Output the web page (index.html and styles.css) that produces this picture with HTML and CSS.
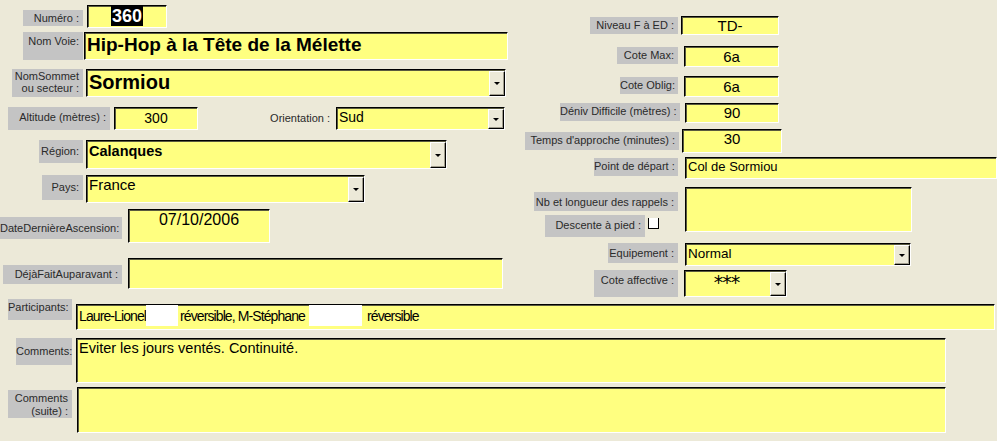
FILE: index.html
```html
<!DOCTYPE html>
<html lang="fr">
<head>
<meta charset="utf-8">
<title>Fiche voie</title>
<link rel="stylesheet" href="styles.css">
</head>
<body>
<div class="form">
  <div class="top">
    <div class="pane left">
      <div class="row r1">
        <div class="lbl l-num">Numéro :</div>
        <div class="fld f-num"><span class="sel">360</span></div>
      </div>
      <div class="row r2">
        <div class="lbl l-voie">Nom Voie:</div>
        <div class="fld f-voie">Hip-Hop à la Tête de la Mélette</div>
      </div>
      <div class="row r3">
        <div class="lbl l-som">NomSommet<br>ou secteur :</div>
        <div class="fld combo f-som"><span class="val">Sormiou</span><span class="dd"></span></div>
      </div>
      <div class="row r4">
        <div class="lbl l-alt">Altitude (mètres) :</div>
        <div class="fld f-alt">300</div>
        <div class="plain l-ori">Orientation :</div>
        <div class="fld combo f-ori"><span class="val">Sud</span><span class="dd"></span></div>
      </div>
      <div class="row r5">
        <div class="lbl l-reg">Région:</div>
        <div class="fld combo f-reg"><span class="val">Calanques</span><span class="dd"></span></div>
      </div>
      <div class="row r6">
        <div class="lbl l-pays">Pays:</div>
        <div class="fld combo f-pays"><span class="val">France</span><span class="dd"></span></div>
      </div>
      <div class="row r7">
        <div class="lbl l-date">DateDernièreAscension:</div>
        <div class="fld f-date">07/10/2006</div>
      </div>
      <div class="row r8">
        <div class="lbl l-deja">DéjàFaitAuparavant :</div>
        <div class="fld f-deja"></div>
      </div>
    </div>
    <div class="pane right">
      <div class="row q1">
        <div class="lbl l-niv">Niveau F à ED :</div>
        <div class="fld num f-niv">TD-</div>
      </div>
      <div class="row q2">
        <div class="lbl l-cmax">Cote Max:</div>
        <div class="fld num f-cmax">6a</div>
      </div>
      <div class="row q3">
        <div class="lbl l-cob">Cote Oblig:</div>
        <div class="fld num f-cob">6a</div>
      </div>
      <div class="row q4">
        <div class="lbl l-den">Déniv Difficile (mètres) :</div>
        <div class="fld num f-den">90</div>
      </div>
      <div class="row q5">
        <div class="lbl l-temps">Temps d'approche (minutes) :</div>
        <div class="fld num f-temps">30</div>
      </div>
      <div class="row q6">
        <div class="lbl l-pt">Point de départ :</div>
        <div class="fld f-pt">Col de Sormiou</div>
      </div>
      <div class="row q7">
        <div class="lblcol">
          <div class="lbl l-nb">Nb et longueur des rappels :</div>
          <div class="row desc">
            <div class="lbl l-desc">Descente à pied :</div>
            <span class="chk"></span>
          </div>
        </div>
        <div class="fld f-nb"></div>
      </div>
      <div class="row q8">
        <div class="lbl l-equ">Equipement :</div>
        <div class="fld combo f-equ"><span class="val">Normal</span><span class="dd"></span></div>
      </div>
      <div class="row q9">
        <div class="lbl l-caff">Cote affective :</div>
        <div class="fld combo f-caff"><span class="val stars">***</span><span class="dd"></span></div>
      </div>
    </div>
  </div>
  <div class="bottom">
    <div class="row p1">
      <div class="lbl l-part">Participants:</div>
      <div class="fld f-part">Laure-Lionel<span class="mask m1"></span>réversible, M-Stéphane<span class="mask m2"></span>réversible</div>
    </div>
    <div class="row p2">
      <div class="lbl l-com">Comments:</div>
      <div class="fld f-com">Eviter les jours ventés. Continuité.</div>
    </div>
    <div class="row p3">
      <div class="lbl l-suite">Comments<br>(suite) :</div>
      <div class="fld f-suite"></div>
    </div>
  </div>
</div>
</body>
</html>
```

FILE: styles.css
```css
html, body {
  margin: 0;
  padding: 0;
}
body {
  background: #ece9d8;
  font-family: "Liberation Sans", Arial, sans-serif;
  color: #111;
}
.form {
  width: 997px;
  height: 441px;
  overflow: hidden;
}
.top {
  display: flex;
  height: 297px;
}
.left {
  width: 520px;
  flex: none;
}
.right {
  flex: 1;
  min-width: 0;
}
.row {
  display: flex;
  align-items: flex-start;
}
.lbl {
  flex: none;
  box-sizing: border-box;
  background: #c4c4c4;
  color: #2a2a2a;
  font-size: 11px;
  line-height: 13px;
  text-align: right;
  padding: 3px 4px 0 0;
  white-space: nowrap;
}
.plain {
  flex: none;
  color: #2a2a2a;
  font-size: 11px;
  text-align: right;
  white-space: nowrap;
}
.fld {
  flex: none;
  box-sizing: border-box;
  background: #ffff80;
  border-top: 1px solid #000;
  border-left: 1px solid #000;
  border-right: 1px solid #fff;
  border-bottom: 1px solid #fff;
  box-shadow: inset 1px 1px 0 #5a5a40;
  color: #000;
  font-size: 14px;
  line-height: 17px;
  padding: 0 2px;
  white-space: nowrap;
  overflow: hidden;
}
.combo {
  display: flex;
  align-items: flex-start;
  padding-right: 0;
}
.combo .val {
  flex: 1;
  min-width: 0;
}
.dd {
  flex: none;
  align-self: stretch;
  width: 16px;
  box-sizing: border-box;
  margin: 1px 0 0 0;
  background: #ece9d8;
  border-top: 1px solid #fff;
  border-left: 1px solid #fff;
  border-right: 1px solid #000;
  border-bottom: 1px solid #000;
  box-shadow: inset -1px -1px 0 #a09c8c;
  display: flex;
  align-items: center;
  justify-content: center;
}
.dd::after {
  content: "";
  width: 0;
  height: 0;
  border-left: 3px solid transparent;
  border-right: 3px solid transparent;
  border-top: 3px solid #000;
}
.num {
  text-align: center;
  font-size: 15px;
}

/* ---------- left pane ---------- */
.r1 { margin-top: 5px; }
.l-num { margin: 5px 0 0 23px; width: 60px; height: 16px; padding-top: 2px; }
.f-num { margin-left: 4px; width: 80px; height: 23px; text-align: center; }
.sel {
  display: inline-block;
  background: #000;
  color: #fff;
  font-weight: bold;
  font-size: 18px;
  line-height: 20px;
  padding: 0 1px;
}

.r2 { margin-top: 4px; }
.l-voie { margin-left: 23px; width: 60px; height: 28px; }
.f-voie {
  margin-left: 1px;
  width: 424px;
  height: 28px;
  font-weight: bold;
  font-size: 19px;
  line-height: 24px;
}

.r3 { margin-top: 9px; }
.l-som { margin-left: 12px; width: 71px; height: 28px; padding-top: 1px; line-height: 12px; }
.f-som {
  margin-left: 3px;
  width: 420px;
  height: 28px;
  font-weight: bold;
  font-size: 20px;
  line-height: 24px;
}

.r4 { margin-top: 10px; }
.l-alt { margin-left: 8px; width: 102px; height: 23px; padding-top: 4px; }
.f-alt { margin-left: 4px; width: 84px; height: 23px; text-align: center; font-size: 14px; line-height: 21px; }
.l-ori { margin-left: 70px; width: 62px; line-height: 23px; }
.f-ori { margin-left: 6px; width: 169px; height: 23px; font-size: 14px; line-height: 18px; }

.r5 { margin-top: 10px; }
.l-reg { margin-left: 39px; width: 44px; height: 23px; padding-top: 5px; }
.f-reg { margin-left: 3px; width: 361px; height: 29px; font-weight: bold; font-size: 14.5px; line-height: 20px; }

.r6 { margin-top: 6px; }
.l-pays { margin-left: 42px; width: 41px; height: 25px; padding-top: 6px; }
.f-pays { margin-left: 3px; width: 279px; height: 28px; font-size: 15px; line-height: 18px; }

.r7 { margin-top: 6px; }
.l-date { margin-top: 8px; width: 122px; height: 22px; padding-top: 5px; }
.f-date { margin-left: 6px; width: 142px; height: 34px; text-align: center; font-size: 16px; line-height: 20px; }

.r8 { margin-top: 15px; }
.l-deja { margin: 7px 0 0 3px; width: 119px; height: 19px; padding-top: 3px; }
.f-deja { margin-left: 6px; width: 375px; height: 31px; }

/* ---------- right pane ---------- */
.q1 { margin-top: 16px; }
.l-niv { margin: 1px 0 0 70px; width: 88px; height: 17px; padding-top: 2px; }
.f-niv { margin-left: 3px; width: 98px; height: 19px; line-height: 17px; }

.q2 { margin-top: 11px; }
.l-cmax { margin: 1px 0 0 97px; width: 61px; height: 17px; padding-top: 2px; }
.f-cmax { margin-left: 6px; width: 95px; height: 21px; line-height: 20px; }

.q3 { margin-top: 9px; }
.l-cob { margin: 1px 0 0 100px; width: 58px; height: 17px; padding-top: 2px; }
.f-cob { margin-left: 6px; width: 95px; height: 21px; line-height: 20px; }

.q4 { margin-top: 6px; }
.l-den { margin-left: 40px; width: 120px; height: 18px; padding-top: 2px; }
.f-den { margin-left: 5px; width: 94px; height: 20px; line-height: 18px; }

.q5 { margin-top: 6px; }
.l-temps { margin: 3px 0 0 5px; width: 154px; height: 18px; padding-top: 2px; }
.f-temps { margin-left: 3px; width: 100px; height: 24px; line-height: 18px; }

.q6 { margin-top: 4px; }
.l-pt { margin: 1px 0 0 74px; width: 84px; height: 18px; padding-top: 2px; }
.f-pt { margin-left: 7px; width: 312px; height: 22px; font-size: 13px; line-height: 18px; }

.q7 { margin-top: 8px; }
.lblcol { flex: none; width: 165px; }
.l-nb { margin: 5px 0 0 14px; width: 144px; height: 19px; padding-top: 4px; }
.desc { margin-top: 4px; }
.l-desc { margin-left: 25px; width: 100px; height: 22px; padding-top: 4px; }
.chk {
  flex: none;
  display: block;
  box-sizing: border-box;
  margin: 3px 0 0 3px;
  width: 11px;
  height: 11px;
  background: #fff;
  border-left: 1px solid #000;
  border-bottom: 1px solid #000;
  border-right: 1px solid #000;
}
.f-nb { width: 227px; height: 45px; }

.q8 { margin-top: 6px; }
.l-equ { margin-left: 88px; width: 70px; height: 20px; padding-top: 4px; }
.f-equ { margin-left: 7px; width: 226px; height: 23px; font-size: 13.5px; line-height: 20px; }

.q9 { margin-top: 4px; }
.l-caff { margin-left: 74px; width: 84px; height: 27px; padding-top: 4px; }
.f-caff { margin-left: 6px; width: 103px; height: 27px; }
.stars {
  text-align: center;
  font-family: "DejaVu Sans", sans-serif;
  font-size: 19px;
  line-height: 22px;
  letter-spacing: -1px;
  padding-right: 4px;
}

/* ---------- bottom ---------- */
.p1 { margin-top: 2px; }
.l-part { margin-left: 8px; width: 64px; height: 21px; padding-top: 2px; }
.f-part {
  margin: 5px 0 0 4px;
  width: 919px;
  height: 26px;
  font-size: 14px;
  letter-spacing: -0.9px;
  line-height: 22px;
}
.mask {
  display: inline-block;
  vertical-align: top;
  background: #fff;
  height: 21px;
  margin-top: 0;
}
.m1 { width: 32px; margin-right: 2px; }
.m2 { width: 53px; margin: 0 5px 0 4px; }

.p2 { margin-top: 8px; }
.l-com { margin-left: 16px; width: 56px; height: 27px; padding-top: 7px; }
.f-com { margin-left: 4px; width: 870px; height: 45px; font-size: 14.5px; line-height: 18px; }

.p3 { margin-top: 4px; }
.l-suite { margin: 3px 0 0 8px; width: 64px; height: 28px; padding-top: 2px; }
.f-suite { margin-left: 5px; width: 869px; height: 46px; }
```
